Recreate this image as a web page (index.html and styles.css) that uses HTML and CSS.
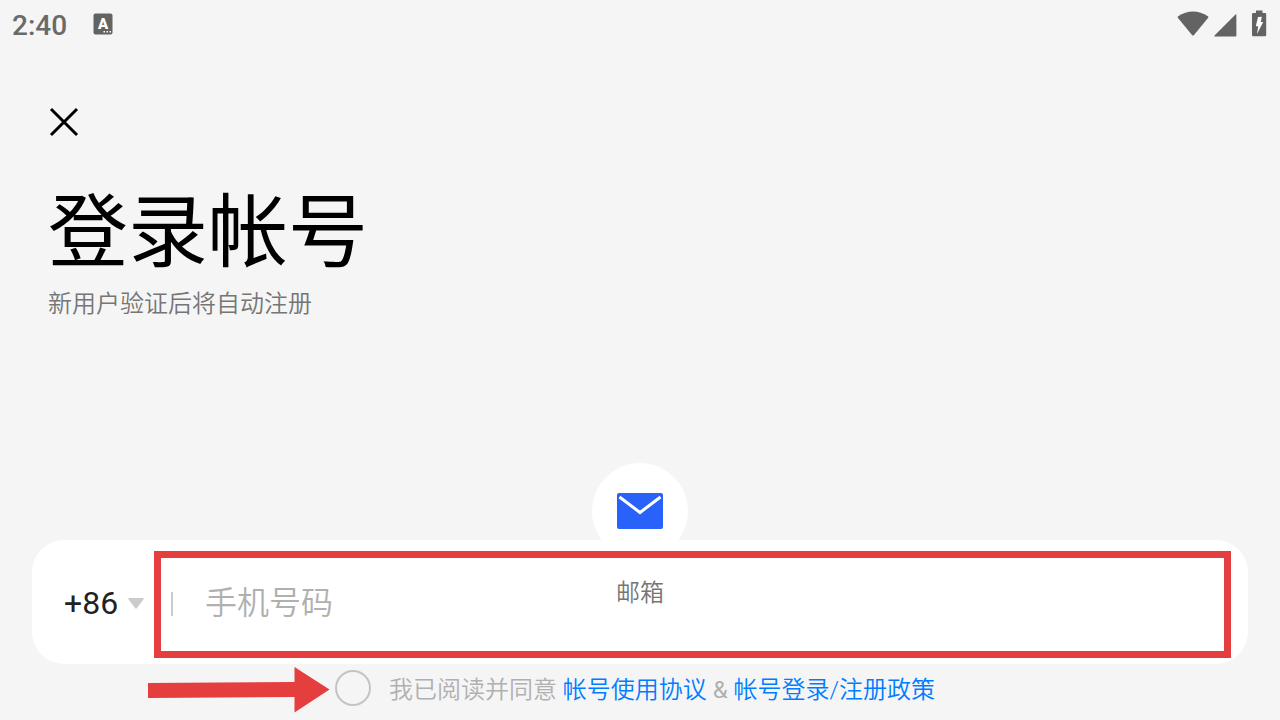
FILE: index.html
```html
<!DOCTYPE html>
<html lang="zh-CN">
<head>
<meta charset="utf-8">
<meta name="viewport" content="width=device-width, initial-scale=1">
<title>登录帐号</title>
<link rel="stylesheet" href="styles.css">
</head>
<body class="screen">
  <header class="status-bar">
    <time class="clock">2:40</time>
    <svg class="keyboard-icon" width="20" height="22" viewBox="0 0 20 22" aria-hidden="true">
      <rect x="0.5" y="0.5" width="19" height="21" rx="2" fill="#636363"/>
      <text class="keyboard-letter" x="10" y="16" text-anchor="middle">A</text>
      <path d="M10.500 18h1.500v1.500h-1.500zM13.500 18h1.500v1.500h-1.500zM16.500 18h1.500v1.500h-1.500z" fill="#fff"/>
    </svg>
    <div class="indicators">
      <svg width="32" height="26" viewBox="0 0 32 26" aria-hidden="true">
        <path d="M0.8 5.6Q16 -4.4 31.2 5.6L31.4 6.6L17 24Q16 25 15 24L0.6 6.6Z" fill="#636363"/>
      </svg>
      <svg class="signal" width="23" height="23" viewBox="0 0 23 23" aria-hidden="true">
        <path d="M21.5 0.4Q22.4 0 22.4 1V21.5Q22.4 22.4 21.5 22.4H1Q0 22.4 0.5 21.5Z" fill="#636363"/>
      </svg>
      <svg class="battery" width="15" height="27" viewBox="0 0 15 27" aria-hidden="true">
        <path d="M4 0.5H10.5V3H13Q14.2 3 14.2 4.2V25Q14.2 26.2 13 26.2H1.2Q0 26.2 0 25V4.2Q0 3 1.2 3H4Z" fill="#636363"/>
        <path d="M6 7L9.8 6.8L8.8 12H11.2L5 24L6.2 16.2H3.8Z" fill="#fff"/>
      </svg>
    </div>
  </header>

  <main class="login">
    <button class="close" type="button" aria-label="关闭">
      <svg width="32" height="32" viewBox="0 0 32 32" aria-hidden="true">
        <path d="M3 3L29 29M29 3L3 29" stroke="#000" stroke-width="3" fill="none"/>
      </svg>
    </button>
    <h1 class="title">登录帐号</h1>
    <p class="subtitle">新用户验证后将自动注册</p>

    <form class="form">
      <div class="phone-card">
        <select class="country" aria-label="国家或地区代码">
          <option>+86</option>
        </select>
        <svg class="caret" width="16" height="11" viewBox="0 0 16 11" aria-hidden="true">
          <path d="M1 0H15Q16.4 0 15.6 1.2L9 10Q8 11.4 7 10L0.4 1.2Q-0.4 0 1 0Z" fill="#ccc"/>
        </svg>
        <span class="divider"></span>
        <input class="phone" type="tel" placeholder="手机号码" aria-label="手机号码">
        <div class="highlight"></div>
        <button class="mail" type="button">
          <span class="mail-disc">
            <svg width="46" height="36" viewBox="0 0 46 36" aria-hidden="true">
              <rect width="46" height="36" rx="2" fill="#2962fa"/>
              <path d="M2.500 4L23 19.500L43.500 4" stroke="#fff" stroke-width="3" fill="none"/>
            </svg>
          </span>
          <span class="mail-label">邮箱</span>
        </button>
      </div>

      <div class="consent">
        <svg class="arrow" width="182" height="46" viewBox="0 0 182 46" aria-hidden="true">
          <path d="M0 16L146.500 15V0L181.500 22.500L146.500 45.500V30L0 31Z" fill="#e53e3e"/>
        </svg>
        <input class="agree" type="checkbox" id="agree">
        <span class="terms"><label for="agree">我已阅读并同意</label> <a class="link" href="#terms">帐号使用协议</a> <span class="joiner">&amp;</span> <a class="link" href="#policy">帐号登录/注册政策</a></span>
      </div>
    </form>
  </main>
</body>
</html>
```
FILE: styles.css
```css
* {
  box-sizing: border-box;
}

.screen {
  display: flex;
  flex-direction: column;
  min-height: 100vh;
  margin: 0;
  background: #f5f5f5;
  color: #000;
  font-family: Roboto, "Noto Sans CJK SC", sans-serif;
}

svg {
  display: block;
  flex: none;
}

.status-bar {
  display: flex;
  align-items: center;
  height: 48px;
  padding: 0 13px 0 12px;
  color: #6a6a6a;
}

.clock {
  margin-right: 26px;
  padding-top: 3px;
  font-size: 28px;
  font-weight: 500;
  line-height: 48px;
}

.keyboard-letter {
  fill: #fff;
  font-size: 15px;
  font-weight: 900;
}

.indicators {
  display: flex;
  align-items: flex-end;
  margin-left: auto;
  padding-bottom: 2px;
}

.signal {
  margin-left: 5px;
}

.battery {
  margin-left: 15px;
}

.login {
  display: flex;
  flex: 1;
  flex-direction: column;
  padding-top: 58px;
}

.close {
  align-self: flex-start;
  margin-left: 48px;
  padding: 0;
  border: 0;
  background: none;
}

.title {
  margin: 37px 48px 0;
  font-size: 80px;
  font-weight: 400;
  line-height: 116px;
}

.subtitle {
  margin: -3px 48px 0;
  color: #757575;
  font-size: 24px;
  font-weight: 350;
  line-height: 32px;
}

.form {
  margin-top: auto;
}

.phone-card {
  position: relative;
  display: flex;
  align-items: center;
  height: 124px;
  margin: 0 32px;
  padding: 2px 32px 0;
  border-radius: 32px;
  background: #fff;
}

.country {
  appearance: none;
  width: 64px;
  padding: 0;
  border: 0;
  background: none;
  color: #222;
  font: 400 32px/48px Roboto, sans-serif;
}

.caret {
  pointer-events: none;
}

.divider {
  width: 2px;
  height: 24px;
  margin: 2px 32px 0 27px;
  background: #ccc;
}

.phone {
  flex: 1;
  min-width: 0;
  padding: 0;
  border: 0;
  outline: 0;
  background: none;
  color: #222;
  font: 350 32px/48px Roboto, "Noto Sans CJK SC", sans-serif;
}

.phone::placeholder {
  color: #b0b0b0;
}

.highlight {
  position: absolute;
  inset: 11px 17px 6px 122px;
  border: 7px solid #e53e3e;
  pointer-events: none;
}

.mail {
  position: absolute;
  top: -77px;
  left: 50%;
  display: flex;
  flex-direction: column;
  align-items: center;
  gap: 16px;
  width: 96px;
  margin-left: -48px;
  padding: 0;
  border: 0;
  background: none;
  color: #757575;
  font: 350 24px/36px Roboto, "Noto Sans CJK SC", sans-serif;
}

.mail-disc {
  display: flex;
  align-items: center;
  justify-content: center;
  width: 96px;
  height: 96px;
  border-radius: 50%;
  background: #fff;
  clip-path: inset(0 0 19px);
}

.consent {
  position: relative;
  display: flex;
  align-items: center;
  gap: 18px;
  width: max-content;
  margin: 0 auto;
  padding: 6px 10px 10px 0;
}

.arrow {
  position: absolute;
  top: 3px;
  right: 100%;
  margin-right: 5px;
}

.agree {
  align-self: flex-start;
  appearance: none;
  width: 36px;
  height: 36px;
  margin: 0;
  border: 2px solid #c4c4c4;
  border-radius: 50%;
}

.agree:checked {
  border-color: #007dff;
  background: #007dff;
}

.terms {
  color: #b0b0b0;
  font-size: 24px;
  font-weight: 350;
  line-height: 40px;
}

.joiner {
  font-weight: 400;
}

.link {
  color: #007dff;
  text-decoration: none;
}
```
